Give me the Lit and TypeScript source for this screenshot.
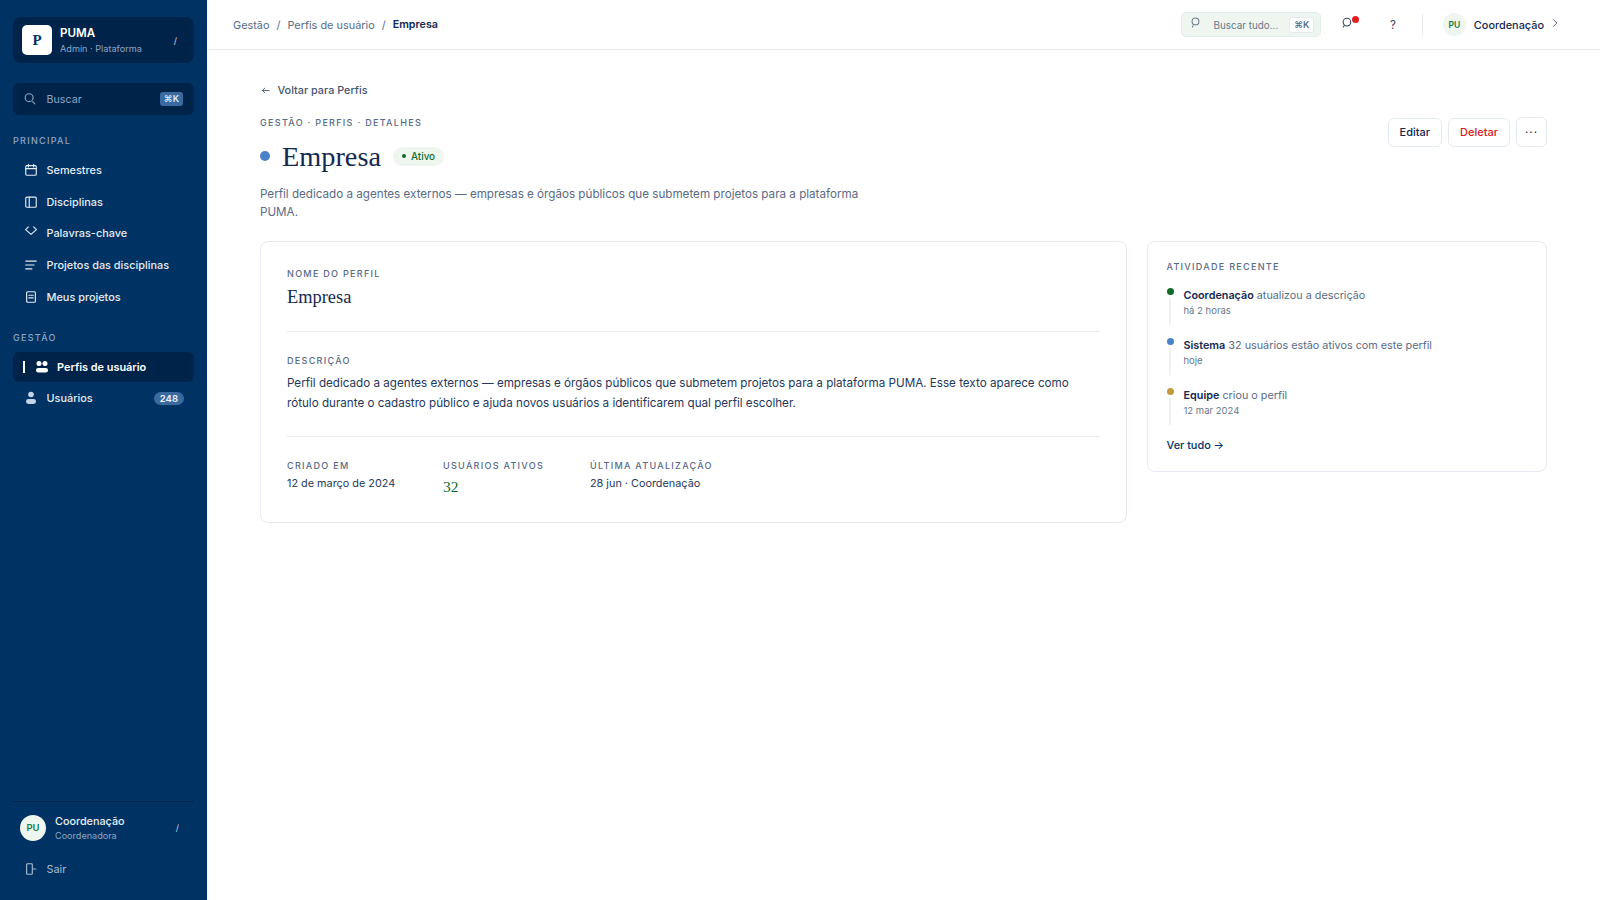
import { LitElement, html, css, svg } from "lit";
import { customElement } from "lit/decorators.js";

const icon = (body: unknown, size = 14, sw = 1.3) => html`<svg
  width=${size}
  height=${size}
  viewBox="0 0 16 16"
  fill="none"
  stroke="currentColor"
  stroke-width=${sw}
  stroke-linecap="round"
  stroke-linejoin="round"
>${body}</svg>`;

const icons = {
  search: svg`<circle cx="7" cy="6.5" r="4.5"/><path d="M11 11l2.5 2.5"/>`,
  calendar: svg`<rect x="2" y="3" width="12" height="11" rx="1.2"/><path d="M2 6.5h12M5 1.5v3M11 1.5v3"/>`,
  book: svg`<rect x="2" y="2.5" width="12" height="11.5" rx="1.2"/><path d="M6 2.5v11.5"/>`,
  tag: svg`<path d="M5 1L1.8 4.2 8 9.5l6.2-5.3L11 1"/>`,
  lines: svg`<path d="M2 3.5h12M2 8h9.5M2 12.5h7"/>`,
  doc: svg`<rect x="3" y="2" width="10" height="12" rx="1.2"/><path d="M5.5 6h5M5.5 9h5"/>`,
  exit: svg`<rect x="3" y="2" width="6.5" height="12" rx="1"/><path d="M10 8h3.5"/>`,
  back: svg`<path d="M13 8H3.5M7 4.5L3.5 8 7 11.5"/>`,
};

@customElement("app-root")
export class AppRoot extends LitElement {
  static styles = css`
    :host {
      display: flex;
      height: 900px;
      width: 1600px;
      overflow: hidden;
      background: #fff;
      font-family: Inter, "Liberation Sans", sans-serif;
      color: #14294f;
    }
    svg {
      display: block;
      flex: none;
    }

    .sidebar {
      width: 207px;
      flex: none;
      box-sizing: border-box;
      background: #003263;
      padding: 17px 13px 0;
      display: flex;
      flex-direction: column;
      color: #dfe7f1;
    }
    .brand {
      height: 46px;
      flex: none;
      background: #00234a;
      border-radius: 8px;
      display: flex;
      align-items: center;
      padding: 0 9px;
      gap: 8px;
    }
    .logo {
      width: 30px;
      height: 30px;
      background: #fff;
      border-radius: 5px;
      display: flex;
      align-items: center;
      justify-content: center;
      font: 700 15px "Liberation Serif", serif;
      color: #003263;
    }
    .brand-text {
      flex: 1;
      min-width: 0;
      padding-top: 1px;
    }
    .brand-name {
      font-size: 11.6px;
      font-weight: 600;
      color: #fff;
      line-height: 15px;
    }
    .brand-sub {
      font-size: 9.15px;
      color: #8fa6c4;
      line-height: 13px;
      margin-top: 1px;
    }
    .tick {
      font-size: 9px;
      color: #c6d3e4;
      margin-right: 8px;
      line-height: 1;
    }
    .search {
      margin-top: 20px;
      height: 32px;
      flex: none;
      background: #00234a;
      border-radius: 6px;
      display: flex;
      align-items: center;
      padding: 0 11px 0 10px;
      gap: 9.5px;
      font-size: 10.7px;
      color: #8fa6c4;
    }
    .search span {
      flex: 1;
    }
    kbd {
      font: 600 9px Inter, sans-serif;
      background: #3a6a9f;
      color: #dfe7f1;
      border-radius: 3px;
      padding: 2px 4px;
      line-height: 10px;
    }
    .group {
      font-size: 9px;
      font-weight: 500;
      letter-spacing: 1.3px;
      color: #8fa6c4;
      line-height: 12px;
      margin: 20px 0 8px;
    }
    .group.second {
      margin-top: 20px;
      margin-bottom: 8px;
    }
    .nav {
      display: flex;
      flex-direction: column;
      gap: 1.7px;
    }
    .item {
      height: 30px;
      display: flex;
      align-items: center;
      gap: 9px;
      padding: 0 10px 0 10.5px;
      font-size: 10.9px;
      font-weight: 500;
      color: #e6ecf4;
      border-radius: 6px;
    }
    .item .text {
      flex: 1;
    }
    .item.active {
      background: #00234a;
      color: #fff;
      font-weight: 600;
      padding-left: 10px;
      gap: 8px;
    }
    .bar {
      width: 2px;
      height: 12px;
      background: #fff;
      margin-right: 2px;
    }
    .count {
      font-size: 9.5px;
      font-weight: 600;
      background: #3a6a9f;
      color: #eef3f9;
      border-radius: 7px;
      padding: 0 6px;
      line-height: 13px;
    }
    .spacer {
      flex: 1;
    }
    .user {
      border-top: 1px solid #00234a;
      padding: 11px 7px 0;
      display: flex;
      align-items: center;
      gap: 9px;
    }
    .avatar {
      width: 26px;
      height: 26px;
      border-radius: 50%;
      background: #eef6ef;
      color: #1a7a3a;
      font-size: 9.5px;
      font-weight: 600;
      display: flex;
      align-items: center;
      justify-content: center;
      flex: none;
    }
    .user-text {
      flex: 1;
      padding-top: 2px;
    }
    .user-name {
      font-size: 10.8px;
      font-weight: 500;
      line-height: 14px;
      color: #e8eef6;
    }
    .user-role {
      font-size: 9.1px;
      color: #8fa6c4;
      line-height: 13px;
    }
    .exit {
      margin: 12px 0 16px;
      color: #a9bcd4;
      font-weight: 400;
    }

    .main {
      flex: 1;
      min-width: 0;
      display: flex;
      flex-direction: column;
    }
    .topbar {
      height: 50px;
      box-sizing: border-box;
      flex: none;
      border-bottom: 1px solid #e8ecf1;
      display: flex;
      align-items: center;
      padding: 0 40px 0 26px;
      font-size: 10.9px;
      color: #5a6b85;
    }
    .crumbs {
      flex: 1;
      display: flex;
      gap: 7px;
    }
    .crumbs b {
      font-weight: 600;
      font-size: 10.75px;
      color: #14294f;
    }
    .top-search {
      width: 140px;
      height: 25px;
      box-sizing: border-box;
      background: #eef6ef;
      border: 1px solid #e4eee8;
      border-radius: 5px;
      display: flex;
      align-items: center;
      padding: 0 9px 0 7px;
      gap: 11px;
      font-size: 9.9px;
      color: #68778e;
      white-space: nowrap;
    }
    .top-search svg {
      transform: translateY(-1.5px);
    }
    .top-search span {
      flex: 1;
    }
    .top-search kbd {
      background: #fff;
      color: #5a6b85;
      border: 1px solid #e4eaf0;
    }
    .bell {
      position: relative;
      margin-left: 19px;
      color: #34475f;
      transform: translateY(-2px);
    }
    .dot {
      position: absolute;
      top: 0;
      right: -6px;
      width: 7px;
      height: 7px;
      border-radius: 50%;
      background: #e02020;
    }
    .help {
      margin-left: 36.5px;
      font-size: 11.5px;
      color: #34475f;
    }
    .sep {
      width: 1px;
      height: 22px;
      background: #e8ecf1;
      margin: 0 20px 0 26px;
    }
    .topbar .avatar {
      width: 23px;
      height: 23px;
      font-size: 8.5px;
      margin-right: 8px;
    }
    .who {
      font-weight: 500;
      color: #14294f;
    }
    .chev {
      margin-left: 6px;
      color: #34475f;
      transform: translateY(-2px);
    }

    .content {
      padding: 30px 53px 0;
    }
    .back {
      display: flex;
      align-items: center;
      gap: 6.5px;
      font-size: 10.85px;
      font-weight: 500;
      color: #44556f;
      line-height: 20px;
    }
    .head {
      display: flex;
      justify-content: space-between;
      align-items: flex-start;
      margin-top: 17px;
    }
    .eyebrow {
      font-size: 9.05px;
      font-weight: 500;
      letter-spacing: 1.28px;
      color: #5a6b85;
      line-height: 12px;
    }
    .title-row {
      display: flex;
      align-items: center;
      margin-top: 8px;
      height: 38px;
    }
    .title-dot {
      width: 10px;
      height: 10px;
      border-radius: 50%;
      background: #4a82c8;
      margin-right: 12px;
    }
    h1 {
      margin: 0;
      font: 400 28.3px "Liberation Serif", serif;
      color: #14294f;
      padding-top: 1px;
    }
    .badge {
      margin-left: 12px;
      display: flex;
      align-items: center;
      gap: 5px;
      height: 19px;
      padding: 0 9px;
      background: #eef6ef;
      border-radius: 10px;
      font-size: 9.9px;
      font-weight: 500;
      color: #146c2e;
    }
    .badge i {
      width: 4px;
      height: 4px;
      border-radius: 50%;
      background: #0f6a2a;
    }
    .desc {
      margin: 10px 0 0;
      width: 610px;
      font-size: 11.65px;
      line-height: 18px;
      color: #5a6b85;
    }
    .actions {
      display: flex;
      gap: 6px;
      align-items: center;
    }
    button {
      height: 29px;
      box-sizing: border-box;
      background: #fff;
      border: 1px solid #e4eaf2;
      border-radius: 6px;
      font: 500 11px Inter, sans-serif;
      color: #14294f;
      padding: 0 11px;
    }
    button.danger {
      color: #d12020;
    }
    button.more {
      width: 31px;
      height: 30px;
      padding: 0;
      letter-spacing: 1px;
    }

    .cols {
      display: flex;
      gap: 20px;
      align-items: flex-start;
      margin-top: 20px;
    }
    .card {
      box-sizing: border-box;
      border: 1px solid #e6ebf3;
      border-radius: 8px;
      background: #fff;
    }
    .detail {
      width: 867px;
      height: 282px;
      padding: 26px 26px 0;
    }
    .cap {
      font-size: 9.1px;
      font-weight: 500;
      letter-spacing: 1.25px;
      color: #5a6b85;
      line-height: 12px;
    }
    .name {
      font: 500 18.4px "Liberation Serif", serif;
      color: #14294f;
      margin-top: 5px;
      line-height: 24px;
    }
    hr {
      border: 0;
      border-top: 1px solid #e8edf4;
      margin: 0;
    }
    .detail hr.a {
      margin-top: 22px;
    }
    .detail .cap.d {
      margin-top: 23px;
    }
    .body {
      margin: 6px 0 0;
      font-size: 11.65px;
      line-height: 20px;
      color: #26395a;
    }
    .detail hr.b {
      margin-top: 23px;
    }
    .meta {
      display: flex;
      margin-top: 23px;
    }
    .meta > div:nth-child(1) {
      width: 156px;
    }
    .meta > div:nth-child(2) {
      width: 147px;
    }
    .val {
      font-size: 10.85px;
      line-height: 16px;
      margin-top: 3px;
      color: #26395a;
    }
    .val.n {
      font: 500 15.5px "Liberation Serif", serif;
      color: #146c2e;
      margin-top: 6px;
      line-height: 18px;
    }

    .activity {
      flex: 1;
      height: 231px;
      padding: 19px 19px 0 18.5px;
    }
    .feed {
      margin-top: 14px;
      display: flex;
      flex-direction: column;
      gap: 12px;
    }
    .ev {
      display: flex;
      gap: 10px;
      height: 38px;
    }
    .rail {
      width: 7px;
      display: flex;
      flex-direction: column;
      align-items: center;
      flex: none;
      gap: 3px;
      padding-top: 1px;
    }
    .rail i {
      width: 7px;
      height: 7px;
      border-radius: 50%;
      flex: none;
    }
    .rail u {
      display: block;
      width: 2px;
      flex: 1;
      background: #eef1f6;
    }
    .ev p {
      margin: 1px 0 0;
      font-size: 10.8px;
      line-height: 16px;
      color: #5a6b85;
    }
    .ev b {
      font-weight: 600;
      color: #14294f;
    }
    .ev small {
      display: block;
      font-size: 9.5px;
      color: #68778e;
      line-height: 14px;
    }
    .more-link {
      margin-top: 12px;
      font-size: 10.9px;
      font-weight: 500;
      color: #003263;
      line-height: 16px;
    }
  `;

  private navItem(ic: unknown, label: string) {
    return html`<div class="item">${icon(ic)}<span class="text">${label}</span></div>`;
  }

  private event(color: string, who: string, what: string, when: string) {
    return html`<div class="ev">
      <div class="rail"><i style="background:${color}"></i><u></u></div>
      <div>
        <p><b>${who}</b> ${what}</p>
        <small>${when}</small>
      </div>
    </div>`;
  }

  render() {
    return html`
      <aside class="sidebar">
        <div class="brand">
          <div class="logo">P</div>
          <div class="brand-text">
            <div class="brand-name">PUMA</div>
            <div class="brand-sub">Admin · Plataforma</div>
          </div>
          <span class="tick">/</span>
        </div>
        <div class="search">${icon(icons.search)}<span>Buscar</span><kbd>⌘K</kbd></div>
        <div class="group">PRINCIPAL</div>
        <nav class="nav">
          ${this.navItem(icons.calendar, "Semestres")}
          ${this.navItem(icons.book, "Disciplinas")}
          ${this.navItem(icons.tag, "Palavras-chave")}
          ${this.navItem(icons.lines, "Projetos das disciplinas")}
          ${this.navItem(icons.doc, "Meus projetos")}
        </nav>
        <div class="group second">GESTÃO</div>
        <nav class="nav">
          <div class="item active">
            <i class="bar"></i>
            <svg width="14" height="14" viewBox="0 0 14 14" fill="currentColor">
              <circle cx="4" cy="3.5" r="2.5" />
              <circle cx="10" cy="3.5" r="2.5" />
              <rect x="1" y="8" width="12" height="4.5" rx="2.2" />
            </svg>
            <span class="text">Perfis de usuário</span>
          </div>
          <div class="item">
            <svg width="14" height="14" viewBox="0 0 14 14" fill="#c6d3e4">
              <circle cx="7" cy="3.5" r="2.8" />
              <rect x="2" y="8" width="10" height="5" rx="2.4" />
            </svg>
            <span class="text">Usuários</span><span class="count">248</span>
          </div>
        </nav>
        <div class="spacer"></div>
        <div class="user">
          <div class="avatar">PU</div>
          <div class="user-text">
            <div class="user-name">Coordenação</div>
            <div class="user-role">Coordenadora</div>
          </div>
          <span class="tick">/</span>
        </div>
        <div class="item exit">${icon(icons.exit)}<span class="text">Sair</span></div>
      </aside>

      <div class="main">
        <header class="topbar">
          <div class="crumbs">
            <span>Gestão</span><span>/</span><span>Perfis de usuário</span><span>/</span><b>Empresa</b>
          </div>
          <div class="top-search">
            ${icon(svg`<circle cx="8" cy="6" r="4.2"/><path d="M5 11.5l-.8 1.5"/>`, 13)}
            <span>Buscar tudo...</span><kbd>⌘K</kbd>
          </div>
          <div class="bell">
            ${icon(svg`<circle cx="8.5" cy="7.5" r="4.7"/><path d="M5 12l-1 1.5"/>`, 13)}
            <i class="dot"></i>
          </div>
          <span class="help">?</span>
          <i class="sep"></i>
          <div class="avatar">PU</div>
          <span class="who">Coordenação</span>
          <span class="chev">${icon(svg`<path d="M5.5 2.5L11 8l-5.5 5.5"/>`, 10)}</span>
        </header>

        <div class="content">
          <div class="back">${icon(icons.back, 11)}Voltar para Perfis</div>
          <div class="head">
            <div>
              <div class="eyebrow">GESTÃO · PERFIS · DETALHES</div>
              <div class="title-row">
                <i class="title-dot"></i>
                <h1>Empresa</h1>
                <div class="badge"><i></i>Ativo</div>
              </div>
              <p class="desc">
                Perfil dedicado a agentes externos — empresas e órgãos públicos que submetem projetos para a plataforma PUMA.
              </p>
            </div>
            <div class="actions">
              <button>Editar</button>
              <button class="danger">Deletar</button>
              <button class="more">···</button>
            </div>
          </div>

          <div class="cols">
            <section class="card detail">
              <div class="cap">NOME DO PERFIL</div>
              <div class="name">Empresa</div>
              <hr class="a" />
              <div class="cap d">DESCRIÇÃO</div>
              <p class="body">
                Perfil dedicado a agentes externos — empresas e órgãos públicos que submetem projetos para a plataforma PUMA. Esse texto aparece como rótulo durante o cadastro público e ajuda novos usuários a identificarem qual perfil escolher.
              </p>
              <hr class="b" />
              <div class="meta">
                <div>
                  <div class="cap">CRIADO EM</div>
                  <div class="val">12 de março de 2024</div>
                </div>
                <div>
                  <div class="cap">USUÁRIOS ATIVOS</div>
                  <div class="val n">32</div>
                </div>
                <div>
                  <div class="cap">ÚLTIMA ATUALIZAÇÃO</div>
                  <div class="val">28 jun · Coordenação</div>
                </div>
              </div>
            </section>

            <section class="card activity">
              <div class="cap">ATIVIDADE RECENTE</div>
              <div class="feed">
                ${this.event("#0f6a2a", "Coordenação", "atualizou a descrição", "há 2 horas")}
                ${this.event("#4a82c8", "Sistema", "32 usuários estão ativos com este perfil", "hoje")}
                ${this.event("#c49a3f", "Equipe", "criou o perfil", "12 mar 2024")}
              </div>
              <div class="more-link">Ver tudo →</div>
            </section>
          </div>
        </div>
      </div>
    `;
  }
}
